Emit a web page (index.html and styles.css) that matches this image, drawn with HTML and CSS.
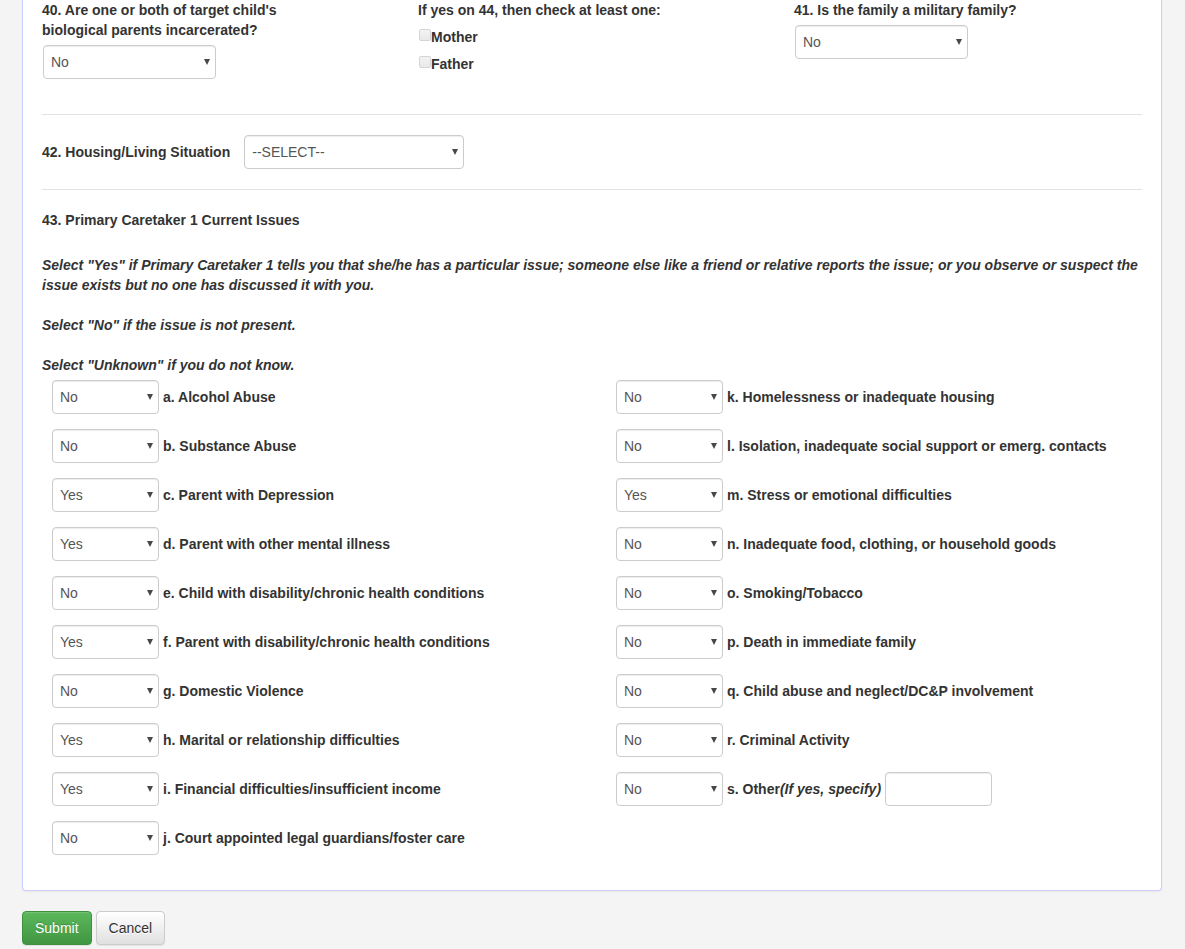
FILE: index.html
```html
<!DOCTYPE html>
<html lang="en">
<head>
<meta charset="utf-8">
<meta name="viewport" content="width=device-width, initial-scale=1">
<title>Family Issues</title>
<link rel="stylesheet" href="styles.css">
</head>
<body>
<form class="page">
  <div class="panel">
    <div class="questions">
      <div class="question">
        <label for="q40">40. Are one or both of target child's<br>biological parents incarcerated?</label>
        <select id="q40" class="control medium"><option>No</option><option>Yes</option></select>
      </div>
      <div class="question">
        <span>If yes on 44, then check at least one:</span>
        <div class="checks">
          <label class="check"><input type="checkbox" disabled>Mother</label>
          <label class="check"><input type="checkbox" disabled>Father</label>
        </div>
      </div>
      <div class="question">
        <label for="q41">41. Is the family a military family?</label>
        <select id="q41" class="control medium"><option>No</option><option>Yes</option></select>
      </div>
    </div>
    <hr>
    <div class="housing">
      <label for="q42">42. Housing/Living Situation</label>
      <select id="q42" class="control large"><option>--SELECT--</option></select>
    </div>
    <hr>
    <h2 class="heading">43. Primary Caretaker 1 Current Issues</h2>
    <div class="instructions">
      <p>Select "Yes" if Primary Caretaker 1 tells you that she/he has a particular issue; someone else like a friend or relative reports the issue; or you observe or suspect the issue exists but no one has discussed it with you.</p>
      <p>Select "No" if the issue is not present.</p>
      <p>Select "Unknown" if you do not know.</p>
    </div>
    <div class="issues">
      <div class="column">
        <div class="issue"><select id="a" class="control small"><option>No</option><option>Yes</option><option>Unknown</option></select><label for="a">a. Alcohol Abuse</label></div>
        <div class="issue"><select id="b" class="control small"><option>No</option><option>Yes</option><option>Unknown</option></select><label for="b">b. Substance Abuse</label></div>
        <div class="issue"><select id="c" class="control small"><option>No</option><option selected>Yes</option><option>Unknown</option></select><label for="c">c. Parent with Depression</label></div>
        <div class="issue"><select id="d" class="control small"><option>No</option><option selected>Yes</option><option>Unknown</option></select><label for="d">d. Parent with other mental illness</label></div>
        <div class="issue"><select id="e" class="control small"><option>No</option><option>Yes</option><option>Unknown</option></select><label for="e">e. Child with disability/chronic health conditions</label></div>
        <div class="issue"><select id="f" class="control small"><option>No</option><option selected>Yes</option><option>Unknown</option></select><label for="f">f. Parent with disability/chronic health conditions</label></div>
        <div class="issue"><select id="g" class="control small"><option>No</option><option>Yes</option><option>Unknown</option></select><label for="g">g. Domestic Violence</label></div>
        <div class="issue"><select id="h" class="control small"><option>No</option><option selected>Yes</option><option>Unknown</option></select><label for="h">h. Marital or relationship difficulties</label></div>
        <div class="issue"><select id="i" class="control small"><option>No</option><option selected>Yes</option><option>Unknown</option></select><label for="i">i. Financial difficulties/insufficient income</label></div>
        <div class="issue"><select id="j" class="control small"><option>No</option><option>Yes</option><option>Unknown</option></select><label for="j">j. Court appointed legal guardians/foster care</label></div>
      </div>
      <div class="column">
        <div class="issue"><select id="k" class="control small"><option>No</option><option>Yes</option><option>Unknown</option></select><label for="k">k. Homelessness or inadequate housing</label></div>
        <div class="issue"><select id="l" class="control small"><option>No</option><option>Yes</option><option>Unknown</option></select><label for="l">l. Isolation, inadequate social support or emerg. contacts</label></div>
        <div class="issue"><select id="m" class="control small"><option>No</option><option selected>Yes</option><option>Unknown</option></select><label for="m">m. Stress or emotional difficulties</label></div>
        <div class="issue"><select id="n" class="control small"><option>No</option><option>Yes</option><option>Unknown</option></select><label for="n">n. Inadequate food, clothing, or household goods</label></div>
        <div class="issue"><select id="o" class="control small"><option>No</option><option>Yes</option><option>Unknown</option></select><label for="o">o. Smoking/Tobacco</label></div>
        <div class="issue"><select id="p" class="control small"><option>No</option><option>Yes</option><option>Unknown</option></select><label for="p">p. Death in immediate family</label></div>
        <div class="issue"><select id="q" class="control small"><option>No</option><option>Yes</option><option>Unknown</option></select><label for="q">q. Child abuse and neglect/DC&amp;P involvement</label></div>
        <div class="issue"><select id="r" class="control small"><option>No</option><option>Yes</option><option>Unknown</option></select><label for="r">r. Criminal Activity</label></div>
        <div class="issue"><select id="s" class="control small"><option>No</option><option>Yes</option><option>Unknown</option></select><label for="s">s. Other<em>(If yes, specify)</em></label><input type="text" class="control small" aria-label="Other issue"></div>
      </div>
    </div>
  </div>
  <div class="actions">
    <button type="submit" class="button primary">Submit</button>
    <button type="button" class="button">Cancel</button>
  </div>
</form>
</body>
</html>
```
FILE: styles.css
```css
* {
  box-sizing: border-box;
}

body {
  margin: 0;
  background: #f4f4f4;
  color: #333;
  font: 14px/20px "Liberation Sans", Arial, sans-serif;
}

.page {
  padding: 0 23px 4px 22px;
}

.panel {
  padding: 0 19px 20px;
  background: #fff;
  border: 1px solid #ccccff;
  border-top: 0;
  border-radius: 0 0 4px 4px;
  box-shadow: 0 1px 2px rgba(0, 0, 0, 0.05);
  font-weight: bold;
}

.questions {
  display: grid;
  grid-template-columns: repeat(3, 1fr);
  gap: 28px;
  padding-bottom: 35px;
}

.question {
  display: flex;
  flex-direction: column;
  align-items: flex-start;
  gap: 5px;
}

.question .control {
  margin-left: 1px;
}

.checks {
  display: flex;
  flex-direction: column;
  gap: 7px;
  padding-top: 2px;
}

.check {
  display: flex;
  align-items: flex-start;
}

.check input {
  appearance: none;
  width: 12px;
  height: 12px;
  margin: 2px 0 0 1px;
  background: linear-gradient(#f3f3f3, #e9e9e9);
  border: 1px solid #d5d5d5;
  border-radius: 2px;
}

hr {
  margin: 0;
  border: 0;
  border-top: 1px solid #e3e3e3;
}

.control {
  height: 34px;
  margin: 0;
  padding: 6px 7px;
  background-color: #fff;
  border: 1px solid #ccc;
  border-radius: 4px;
  box-shadow: inset 0 1px 1px rgba(0, 0, 0, 0.075);
  color: #555;
  font: inherit;
  font-weight: normal;
}

select.control {
  appearance: none;
  background-image: url("data:image/svg+xml,%3Csvg xmlns='http://www.w3.org/2000/svg' width='6' height='6'%3E%3Cpath d='M0 0h6L3 6z' fill='%23484848'/%3E%3C/svg%3E");
  background-repeat: no-repeat;
  background-position: right 5px center;
}

.small {
  width: 107px;
}

.medium {
  width: 173px;
}

.large {
  width: 220px;
}

.housing {
  display: flex;
  align-items: center;
  gap: 14px;
  padding: 20px 0;
}

.heading {
  margin: 20px 0 25px;
  font-size: 14px;
  line-height: 20px;
}

.instructions {
  font-style: italic;
}

.instructions p {
  margin: 0 0 20px;
}

.instructions p:last-child {
  margin-bottom: 5px;
}

.issues {
  display: grid;
  grid-template-columns: 1fr 1fr;
  gap: 38px;
  padding: 0 0 15px 10px;
}

.column {
  display: flex;
  flex-direction: column;
  gap: 15px;
}

.issue {
  display: flex;
  align-items: center;
  gap: 4px;
}

.actions {
  display: flex;
  gap: 4px;
  padding-top: 20px;
}

.button {
  height: 34px;
  padding: 6px 12px;
  background: linear-gradient(#fff, #e0e0e0);
  border: 1px solid #ccc;
  border-radius: 4px;
  box-shadow: inset 0 1px 0 rgba(255, 255, 255, 0.15), 0 1px 1px rgba(0, 0, 0, 0.075);
  color: #333;
  font: inherit;
  text-shadow: 0 1px 0 #fff;
}

.primary {
  background: linear-gradient(#5cb85c, #419641);
  border-color: #3e8f3e;
  color: #fff;
  text-shadow: 0 -1px 0 rgba(0, 0, 0, 0.2);
}
```
